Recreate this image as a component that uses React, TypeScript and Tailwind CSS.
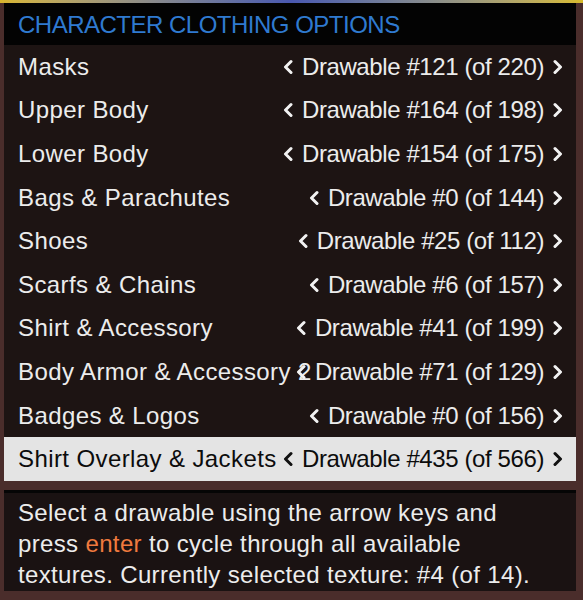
import React from "react";

const rows = [
  { label: "Masks", value: "Drawable #121 (of 220)" },
  { label: "Upper Body", value: "Drawable #164 (of 198)" },
  { label: "Lower Body", value: "Drawable #154 (of 175)" },
  { label: "Bags & Parachutes", value: "Drawable #0 (of 144)" },
  { label: "Shoes", value: "Drawable #25 (of 112)" },
  { label: "Scarfs & Chains", value: "Drawable #6 (of 157)" },
  { label: "Shirt & Accessory", value: "Drawable #41 (of 199)" },
  { label: "Body Armor & Accessory 2", value: "Drawable #71 (of 129)" },
  { label: "Badges & Logos", value: "Drawable #0 (of 156)" },
  { label: "Shirt Overlay & Jackets", value: "Drawable #435 (of 566)", active: true },
];

function Chevron({ dir, dark }: { dir: "left" | "right"; dark?: boolean }) {
  return (
    <svg width="10" height="16" viewBox="0 0 10 16" className="shrink-0">
      <polyline
        points={dir === "left" ? "8,2.5 2.5,8 8,13.5" : "2,2.5 7.5,8 2,13.5"}
        fill="none"
        stroke={dark ? "#111" : "#f2f2f2"}
        strokeWidth="3"
        strokeLinecap="round"
        strokeLinejoin="round"
      />
    </svg>
  );
}

export default function App() {
  return (
    <div
      className="w-[583px] h-[600px] flex flex-col bg-[#4a2d2b] overflow-hidden"
      style={{ fontFamily: '"Liberation Sans", Arial, sans-serif' }}
    >
      {/* strip of the game picture above the menu */}
      <div className="h-[3px] bg-gradient-to-r from-[#d9b62c] via-[#4a58b0] to-[#d8bb2a]" />

      <div className="ml-[4px] mr-[7px] flex flex-col">
        {/* Title */}
        <div className="h-[42px] bg-[#030303] flex items-center px-[14px] pt-[2px]">
          <span className="text-[24px] tracking-[-0.5px] text-[#2f7ad0] leading-none">
            CHARACTER CLOTHING OPTIONS
          </span>
        </div>

        {/* Options */}
        <div className="bg-[#1d1413]">
          {rows.map((row) => (
            <div
              key={row.label}
              className={`h-[43.6px] flex items-center pl-[14px] pr-[13px] text-[24px] ${
                row.active ? "bg-[#e4e4e4] text-[#0c0c0c]" : "text-[#ececec]"
              }`}
            >
              <span className="flex-1 min-w-0 whitespace-nowrap tracking-[0.4px]">{row.label}</span>
              <div className="shrink-0 flex items-center gap-[9px]">
                <Chevron dir="left" dark={row.active} />
                <span className="whitespace-nowrap tracking-[-0.4px]">{row.value}</span>
                <Chevron dir="right" dark={row.active} />
              </div>
            </div>
          ))}
        </div>
      </div>

      {/* Description */}
      <div className="ml-[4px] mr-[7px] mt-[9px] h-[101px] bg-[#1a1212] border-t-[3px] border-[#050505] px-[14px] pt-[4px]">
        <p className="text-[24px] leading-[31px] tracking-[0.35px] text-[#ececec] whitespace-nowrap">
          Select a drawable using the arrow keys and
          <br />
          press <span className="text-[#f07a3e]">enter</span> to cycle through all available
          <br />
          textures. Currently selected texture: #4 (of 14).
        </p>
      </div>
    </div>
  );
}
